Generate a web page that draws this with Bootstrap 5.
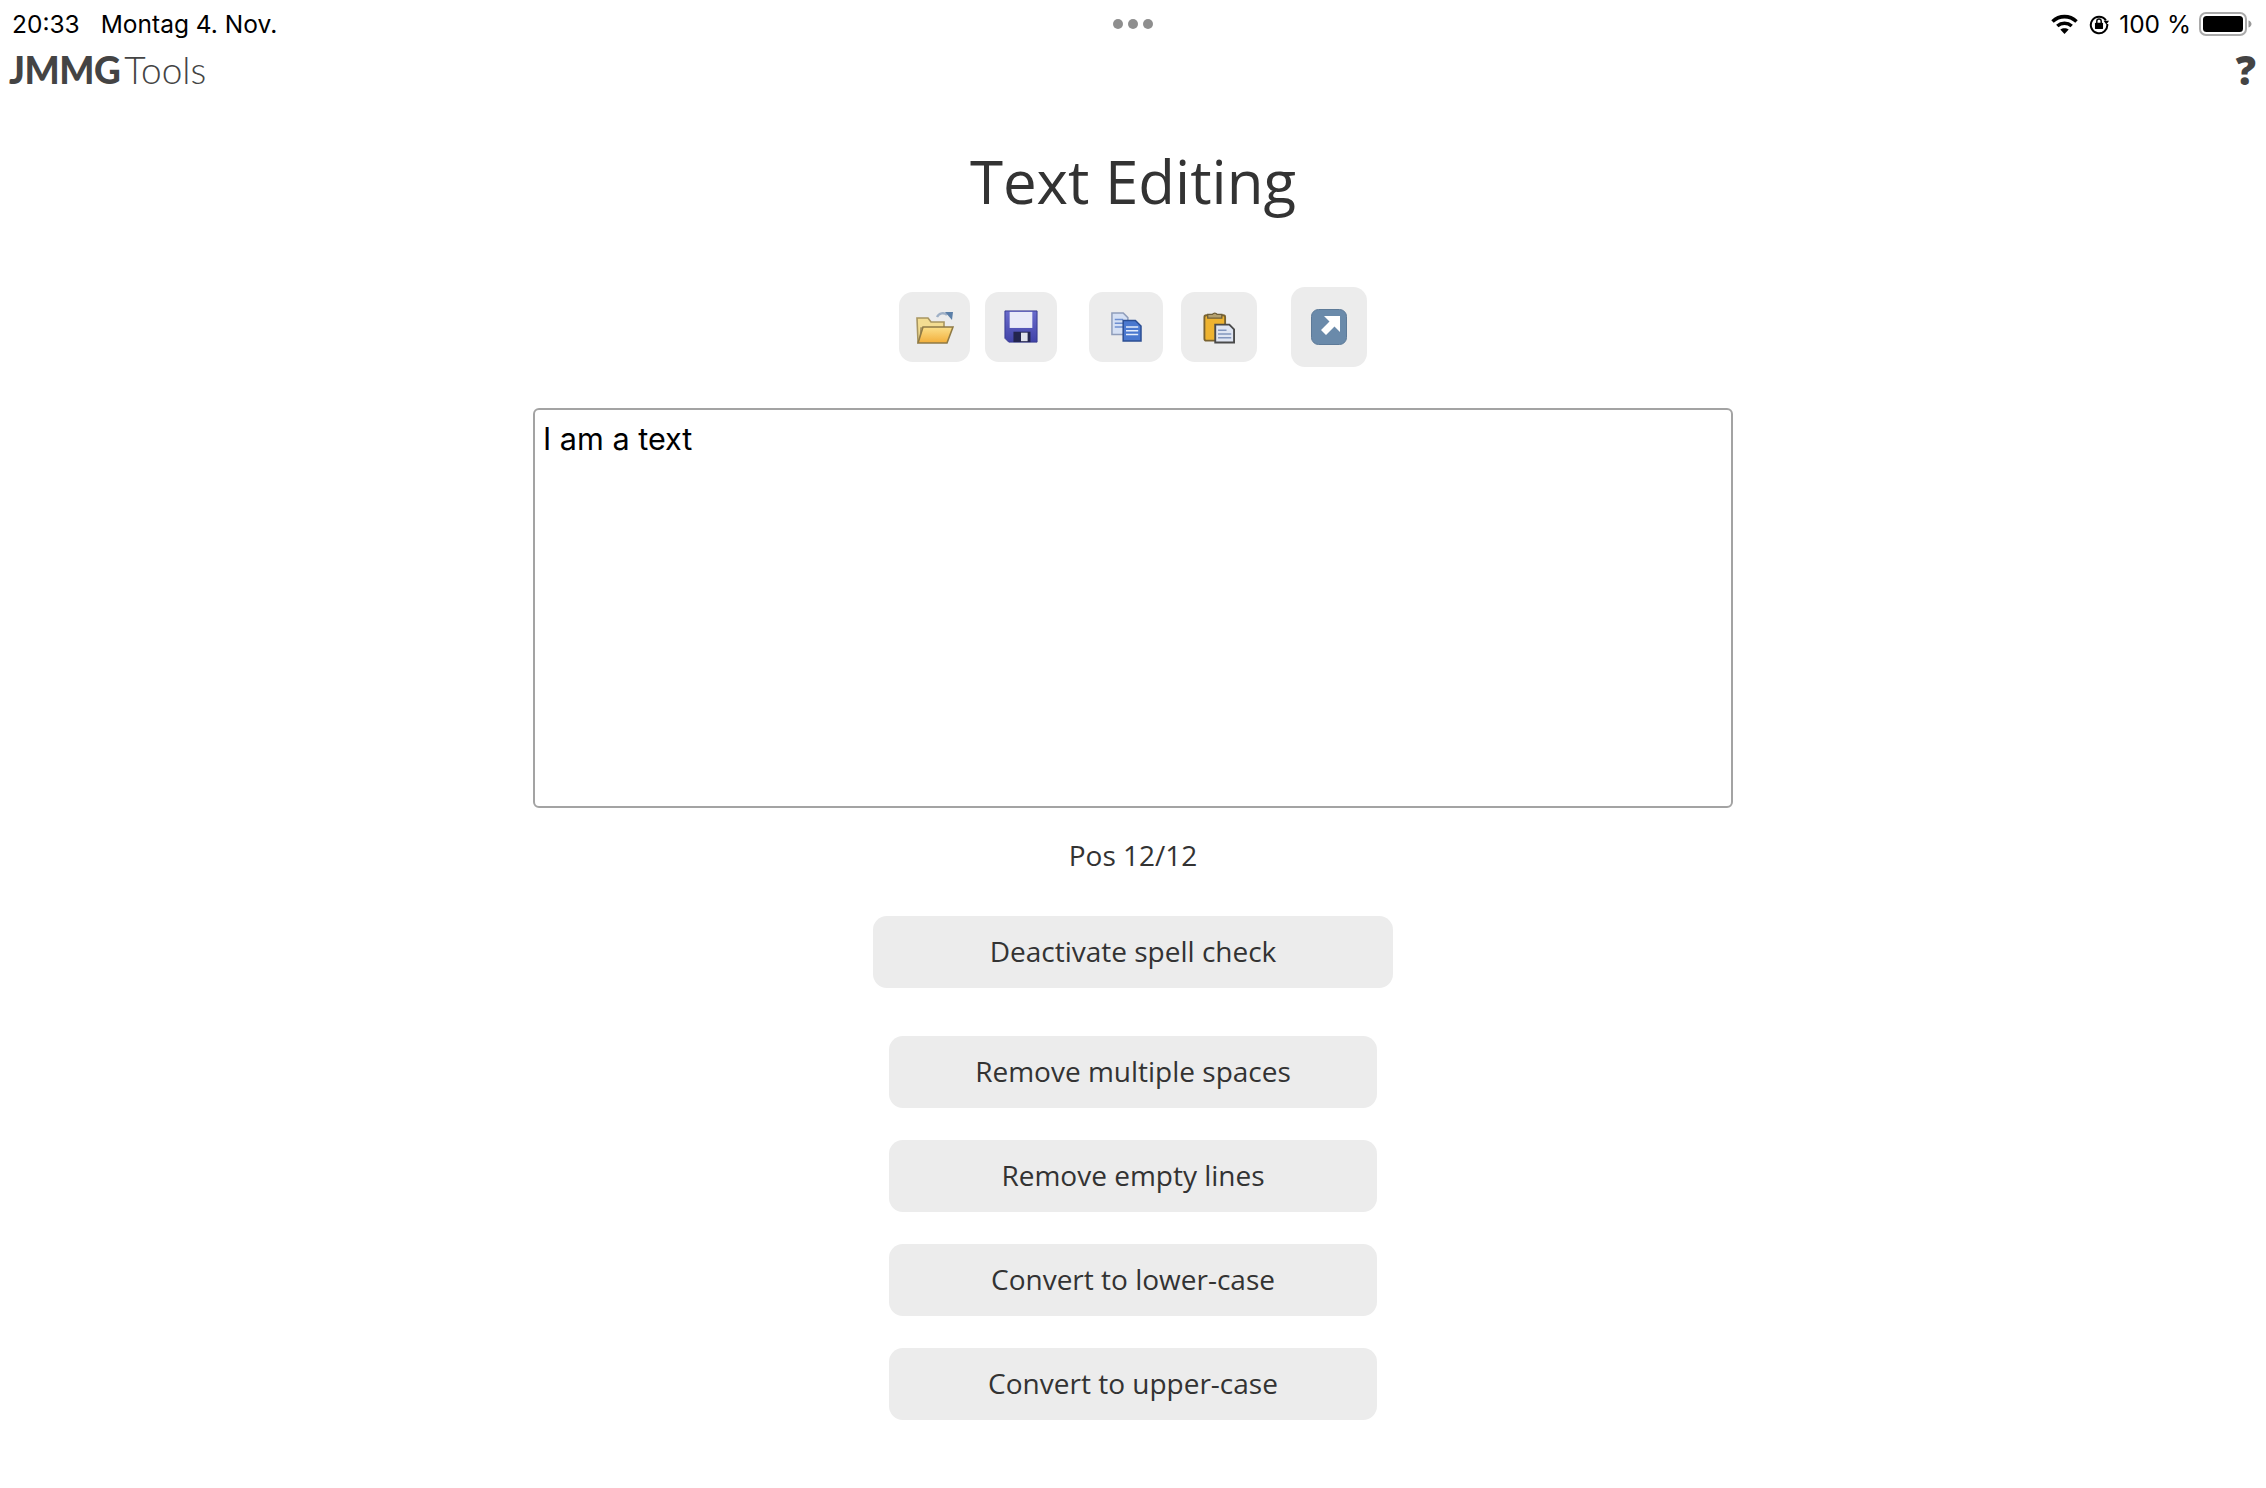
<!DOCTYPE html>
<html lang="en">
  <head>
    <meta charset="UTF-8" />
    <meta name="viewport" content="width=device-width, initial-scale=1" />
    <title>Text Editing</title>
    <link href="https://cdn.jsdelivr.net/npm/bootstrap@5.3.0/dist/css/bootstrap.min.css" rel="stylesheet" />
    <style>
      body {
        font-family: "Open Sans", sans-serif;
        color: #333;
        background: #fff;
        min-height: 1488px;
      }
      .status-row {
        height: 46px;
        padding: 8px 13px 0 12px;
        font-family: Inter, sans-serif;
        font-size: 24.5px;
        line-height: 32px;
        color: #000;
      }
      .status-side {
        flex: 1 1 0;
      }
      .status-gap {
        margin-left: 21px;
      }
      .more-row {
        padding-top: 11px;
        gap: 5px;
      }
      .more-dot {
        width: 10px;
        height: 10px;
        background: #8e8e8e;
        border-radius: 50%;
      }
      .status-icon-gap {
        margin-left: 9px;
      }
      .brand-row {
        height: 48px;
        padding: 0 9px 0 9px;
        color: #444;
      }
      .brand-bold {
        font-family: Lato, sans-serif;
        font-weight: 900;
        font-size: 37px;
        line-height: 48px;
        letter-spacing: -0.5px;
      }
      .brand-thin {
        font-family: Lato, sans-serif;
        font-weight: 300;
        font-size: 37px;
        line-height: 48px;
        margin-left: 4px;
      }
      .help-mark {
        font-family: "Open Sans", sans-serif;
        font-weight: 800;
        font-size: 40px;
        line-height: 48px;
        margin-right: 1px;
      }
      .page-title {
        font-size: 60px;
        font-weight: 400;
        line-height: 88px;
        margin: 43px 0 62px;
        color: #333;
      }
      .tool-row {
        height: 80px;
        margin-bottom: 41px;
      }
      .tool-btn {
        background: #ececec;
        border: 0;
        border-radius: 14px;
        padding: 0;
        display: flex;
        align-items: center;
        justify-content: center;
      }
      .tool-btn svg {
        filter: blur(0.7px);
      }
      .tool-open { width: 71px; height: 70px; }
      .tool-save { width: 72px; height: 70px; margin-left: 15px; }
      .tool-copy { width: 74px; height: 70px; margin-left: 32px; }
      .tool-paste { width: 76px; height: 70px; margin-left: 18px; }
      .tool-share { width: 76px; height: 80px; margin-left: 34px; }
      .text-box {
        width: 1200px;
        height: 400px;
        border: 2px solid #a3a3a3;
        border-radius: 6px;
        padding: 9px 8px;
        font-family: Inter, sans-serif;
        font-size: 30.6px;
        line-height: 40px;
        color: #000;
        resize: none;
        outline: none;
        display: block;
      }
      .pos-label {
        font-size: 28px;
        line-height: 38px;
        margin: 28px 0 42px;
      }
      .action-btn {
        background: #ececec;
        color: #333;
        border: 0;
        border-radius: 14px;
        height: 72px;
        font-size: 28px;
        padding: 0 0 3px;
      }
      .action-wide {
        width: 520px;
        margin-bottom: 48px;
      }
      .action-stack {
        gap: 32px;
      }
      .action-stack .action-btn {
        width: 488px;
      }
    </style>
  </head>
  <body>
    <div class="status-row d-flex align-items-start">
      <div class="status-side"><span>20:33</span><span class="status-gap">Montag 4. Nov.</span></div>
      <div class="more-row d-flex">
        <span class="more-dot"></span><span class="more-dot"></span><span class="more-dot"></span>
      </div>
      <div class="status-side d-flex justify-content-end align-items-center">
        <svg width="29" height="22" viewBox="0 0 28 22" fill="none" stroke="#000" stroke-width="3.6">
          <path d="M2 8.500C9 2 19 2 26 8.500" />
          <path d="M6.800 13C11 9.400 17 9.400 21.200 13" />
          <path d="M14 21l-4.200-4.400c2.400-1.800 6-1.800 8.400 0z" fill="#000" stroke="none" />
        </svg>
        <svg class="status-icon-gap" width="22" height="22" viewBox="0 0 24 24" fill="none" stroke="#000" stroke-width="2.2">
          <path d="M19.500 8A9 9 0 1 0 21 12" />
          <path d="M17 8.500h6l-3 4z" fill="#000" stroke="none" />
          <rect x="7.600" y="10.500" width="8.800" height="7" rx="1" fill="#000" stroke="none" />
          <path d="M9.600 11V9a2.400 2.400 0 0 1 4.800 0v2" stroke-width="1.600" />
        </svg>
        <span class="status-icon-gap">100 %</span>
        <svg class="ms-2" width="54" height="24" viewBox="0 0 54 24">
          <rect x="1" y="1" width="46" height="22" rx="6" fill="none" stroke="#aaa" stroke-width="2" />
          <rect x="4" y="4" width="40" height="16" rx="3.500" fill="#000" />
          <path d="M49.500 8.500c2 .6 3 2 3 3.500s-1 2.900-3 3.500z" fill="#999" />
        </svg>
      </div>
    </div>

    <div class="brand-row d-flex justify-content-between align-items-center">
      <div class="d-flex"><span class="brand-bold">JMMG</span><span class="brand-thin">Tools</span></div>
      <span class="help-mark">?</span>
    </div>

    <main class="d-flex flex-column align-items-center">
      <h1 class="page-title">Text Editing</h1>

      <div class="tool-row d-flex align-items-center">
        <button class="tool-btn tool-open" type="button" aria-label="Open">
          <svg width="38" height="36" viewBox="0 0 38 36">
            <defs>
              <linearGradient id="folderFront" x1="0" y1="0" x2="0" y2="1">
                <stop offset="0" stop-color="#fbe08a" />
                <stop offset="1" stop-color="#f2ae3a" />
              </linearGradient>
            </defs>
            <path d="M21 8c2-4 7-5 10-2" fill="none" stroke="#9fb0c6" stroke-width="2.400" />
            <path d="M29 3l8 0-1 8z" fill="#5b7fa8" />
            <path d="M1 9h11l3 4h13v6H5l-1 14H2z" fill="#f3dd92" stroke="#a89560" stroke-width="1.600" />
            <path d="M7 18h30l-6 16H2z" fill="url(#folderFront)" stroke="#8f7a45" stroke-width="1.600" />
          </svg>
        </button>
        <button class="tool-btn tool-save" type="button" aria-label="Save">
          <svg width="34" height="34" viewBox="0 0 36 36">
            <defs>
              <linearGradient id="diskBody" x1="0" y1="0" x2="0" y2="1">
                <stop offset="0" stop-color="#6a6ccc" />
                <stop offset="1" stop-color="#4143a8" />
              </linearGradient>
            </defs>
            <path d="M1 1h34v33H5l-4-4z" fill="url(#diskBody)" stroke="#34378e" />
            <rect x="6" y="2" width="24" height="17" fill="#e9ebf8" />
            <rect x="10" y="23" width="18" height="11" fill="#23254f" />
            <rect x="18" y="24" width="7" height="9" fill="#dfe1ea" />
          </svg>
        </button>
        <button class="tool-btn tool-copy" type="button" aria-label="Copy">
          <svg width="32" height="30" viewBox="0 0 34 32">
            <path d="M2 1h12l5 5v18H2z" fill="#d5e0f4" stroke="#8f9dba" stroke-width="1.600" />
            <path d="M5 8h9M5 12h9M5 16h9" stroke="#6d8ed0" stroke-width="1.600" />
            <path d="M14 9h13l6 6v16H14z" fill="#4a78cf" stroke="#2b4d92" stroke-width="1.600" />
            <path d="M17 16h13M17 20h13M17 24h13" stroke="#e5edfb" stroke-width="1.800" />
          </svg>
        </button>
        <button class="tool-btn tool-paste" type="button" aria-label="Paste">
          <svg width="32" height="33" viewBox="0 0 34 34">
            <rect x="1.500" y="4" width="22" height="27" rx="2" fill="#eeb330" stroke="#7a6330" stroke-width="2" />
            <path d="M5 7V3h5a3 3 0 0 1 5 0h5v4z" fill="#b3a06e" stroke="#6e5f3a" stroke-width="1.400" />
            <path d="M13 14h15l5 5v14H13z" fill="#dfe5f2" stroke="#4a4a4a" stroke-width="2" />
            <path d="M16 20h9M16 24h14M16 28h14" stroke="#8296bd" stroke-width="1.600" />
          </svg>
        </button>
        <button class="tool-btn tool-share" type="button" aria-label="Open in new window">
          <svg width="36" height="36" viewBox="0 0 36 36">
            <rect x="0.500" y="0.500" width="35" height="35" rx="7" fill="#6a8aaa" stroke="#5d7a98" />
            <path d="M13 7h16v16l-5.500-5.500-8.500 8.500-5-5 8.500-8.500z" fill="#fff" />
          </svg>
        </button>
      </div>

      <textarea class="text-box" spellcheck="false">I am a text</textarea>

      <div class="pos-label">Pos 12/12</div>

      <button class="btn action-btn action-wide" type="button">Deactivate spell check</button>

      <div class="action-stack d-flex flex-column align-items-center">
        <button class="btn action-btn" type="button">Remove multiple spaces</button>
        <button class="btn action-btn" type="button">Remove empty lines</button>
        <button class="btn action-btn" type="button">Convert to lower-case</button>
        <button class="btn action-btn" type="button">Convert to upper-case</button>
      </div>
    </main>

    <script src="https://cdn.jsdelivr.net/npm/bootstrap@5.3.0/dist/js/bootstrap.bundle.min.js"></script>
  </body>
</html>
